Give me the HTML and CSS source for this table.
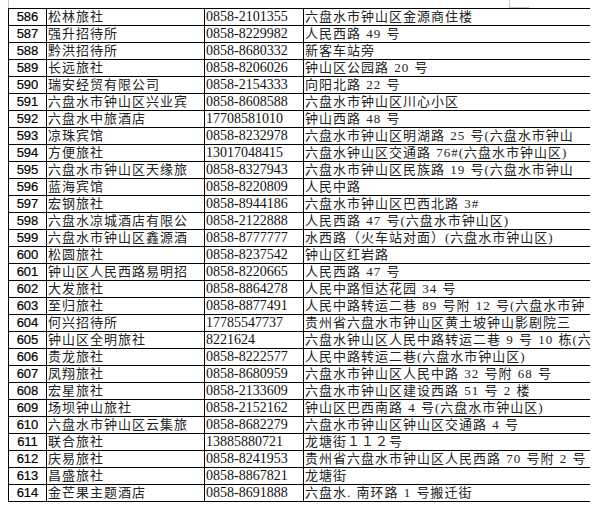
FILE: index.html
```html
<!DOCTYPE html>
<html lang="zh-CN">
<head>
<meta charset="utf-8">
<title>旅社名单</title>
<link rel="stylesheet" href="styles.css">
</head>
<body>
<div class="gridlines"><span class="gl-corner"></span></div>
<div class="sheet">
  <div class="c no">586</div><div class="c nm">松林旅社</div><div class="c ph">0858-2101355</div><div class="c ad">六盘水市钟山区金源商住楼</div>
  <div class="c no">587</div><div class="c nm">强升招待所</div><div class="c ph">0858-8229982</div><div class="c ad">人民西路 49 号</div>
  <div class="c no">588</div><div class="c nm">黔洪招待所</div><div class="c ph">0858-8680332</div><div class="c ad">新客车站旁</div>
  <div class="c no">589</div><div class="c nm">长远旅社</div><div class="c ph">0858-8206026</div><div class="c ad">钟山区公园路 20 号</div>
  <div class="c no">590</div><div class="c nm">瑞安经贸有限公司</div><div class="c ph">0858-2154333</div><div class="c ad">向阳北路 22 号</div>
  <div class="c no">591</div><div class="c nm">六盘水市钟山区兴业宾</div><div class="c ph">0858-8608588</div><div class="c ad">六盘水市钟山区川心小区</div>
  <div class="c no">592</div><div class="c nm">六盘水中旅酒店</div><div class="c ph">17708581010</div><div class="c ad">钟山西路 48 号</div>
  <div class="c no">593</div><div class="c nm">凉珠宾馆</div><div class="c ph">0858-8232978</div><div class="c ad">六盘水市钟山区明湖路 25 号(六盘水市钟山</div>
  <div class="c no">594</div><div class="c nm">方便旅社</div><div class="c ph">13017048415</div><div class="c ad">六盘水钟山区交通路 76#(六盘水市钟山区)</div>
  <div class="c no">595</div><div class="c nm">六盘水市钟山区天缘旅</div><div class="c ph">0858-8327943</div><div class="c ad">六盘水市钟山区民族路 19 号(六盘水市钟山</div>
  <div class="c no">596</div><div class="c nm">蓝海宾馆</div><div class="c ph">0858-8220809</div><div class="c ad">人民中路</div>
  <div class="c no">597</div><div class="c nm">宏钢旅社</div><div class="c ph">0858-8944186</div><div class="c ad">六盘水市钟山区巴西北路 3#</div>
  <div class="c no">598</div><div class="c nm">六盘水凉城酒店有限公</div><div class="c ph">0858-2122888</div><div class="c ad">人民西路 47 号(六盘水市钟山区)</div>
  <div class="c no">599</div><div class="c nm">六盘水市钟山区鑫源酒</div><div class="c ph">0858-8777777</div><div class="c ad">水西路（火车站对面）(六盘水市钟山区)</div>
  <div class="c no">600</div><div class="c nm">松圆旅社</div><div class="c ph">0858-8237542</div><div class="c ad">钟山区红岩路</div>
  <div class="c no">601</div><div class="c nm">钟山区人民西路易明招</div><div class="c ph">0858-8220665</div><div class="c ad">人民西路 47 号</div>
  <div class="c no">602</div><div class="c nm">大发旅社</div><div class="c ph">0858-8864278</div><div class="c ad">人民中路恒达花园 34 号</div>
  <div class="c no">603</div><div class="c nm">至归旅社</div><div class="c ph">0858-8877491</div><div class="c ad">人民中路转运二巷 89 号附 12 号(六盘水市钟</div>
  <div class="c no">604</div><div class="c nm">何兴招待所</div><div class="c ph">17785547737</div><div class="c ad">贵州省六盘水市钟山区黄土坡钟山影剧院三</div>
  <div class="c no">605</div><div class="c nm">钟山区全明旅社</div><div class="c ph">8221624</div><div class="c ad">六盘水钟山区人民中路转运二巷 9 号 10 栋(六</div>
  <div class="c no">606</div><div class="c nm">贵龙旅社</div><div class="c ph">0858-8222577</div><div class="c ad">人民中路转运二巷(六盘水市钟山区)</div>
  <div class="c no">607</div><div class="c nm">凤翔旅社</div><div class="c ph">0858-8680959</div><div class="c ad">六盘水市钟山区人民中路 32 号附 68 号</div>
  <div class="c no">608</div><div class="c nm">宏星旅社</div><div class="c ph">0858-2133609</div><div class="c ad">六盘水市钟山区建设西路 51 号 2 楼</div>
  <div class="c no">609</div><div class="c nm">场坝钟山旅社</div><div class="c ph">0858-2152162</div><div class="c ad">钟山区巴西南路 4 号(六盘水市钟山区)</div>
  <div class="c no">610</div><div class="c nm">六盘水市钟山区云集旅</div><div class="c ph">0858-8682279</div><div class="c ad">六盘水市钟山区钟山区交通路 4 号</div>
  <div class="c no">611</div><div class="c nm">联合旅社</div><div class="c ph">13885880721</div><div class="c ad">龙塘街１１２号</div>
  <div class="c no">612</div><div class="c nm">庆易旅社</div><div class="c ph">0858-8241953</div><div class="c ad">贵州省六盘水市钟山区人民西路 70 号附 2 号</div>
  <div class="c no">613</div><div class="c nm">昌盛旅社</div><div class="c ph">0858-8867821</div><div class="c ad">龙塘街</div>
  <div class="c no">614</div><div class="c nm">金芒果主题酒店</div><div class="c ph">0858-8691888</div><div class="c ad">六盘水. 南环路 1 号搬迁街</div>
</div>
</body>
</html>
```
FILE: styles.css
```css
html, body {
  background: #ffffff;
}
body {
  margin: 0 8px;
  color: #000;
}
.gridlines {
  height: 8px;
  box-sizing: border-box;
  border-left: 1px solid #c8c8c8;
  display: flex;
}
.gl-corner {
  margin-left: 500px;
  width: 19px;
  height: 7px;
  border-left: 1px solid #c8c8c8;
  border-bottom: 1px solid #c8c8c8;
}
.sheet {
  display: grid;
  grid-template-columns: 38px 158px 99px 287px;
  grid-auto-rows: 17px;
  width: 583px;
  box-sizing: border-box;
  border-left: 1px solid #000;
  border-top: 1px solid #000;
}
.c {
  box-sizing: border-box;
  border-right: 1px solid #000;
  border-bottom: 1px solid #000;
  overflow: hidden;
  white-space: nowrap;
  line-height: 16px;
  height: 17px;
}
.no {
  font-family: "Liberation Sans", Arial, sans-serif;
  font-size: 13px;
  text-align: center;
  color: #000;
  -webkit-text-stroke: 0.2px #000;
}
.nm, .ad {
  font-family: "Liberation Serif", "Noto Sans CJK SC", serif;
  font-size: 13px;
  letter-spacing: 1px;
  word-spacing: 1px;
  color: #222;
  padding-left: 1px;
}
.ph {
  font-family: "Liberation Serif", "Times New Roman", serif;
  font-size: 14px;
  color: #111;
  padding-left: 1px;
}
```
